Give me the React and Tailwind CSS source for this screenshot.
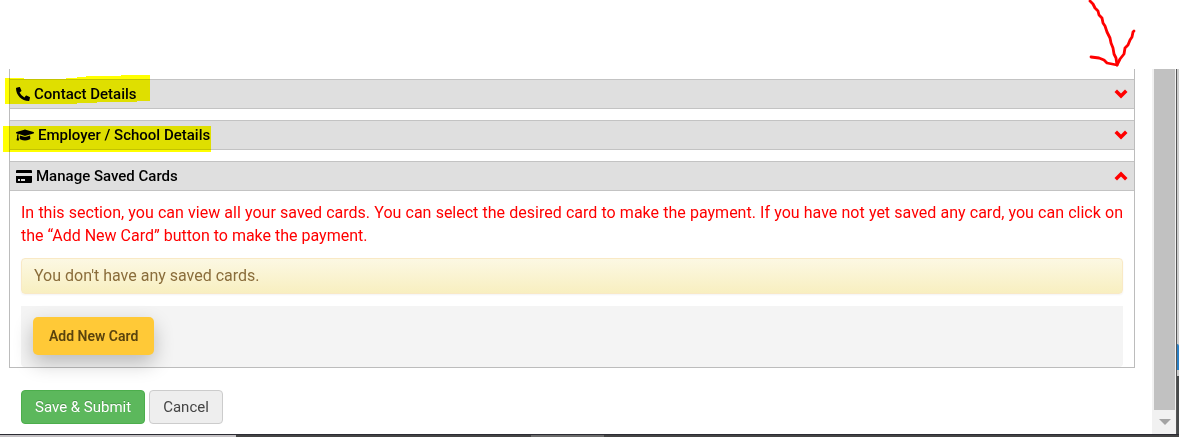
import React from 'react';
import { FaGraduationCap, FaPhoneAlt } from 'react-icons/fa';

const CardIcon = () => (
    <svg width="16" height="13" viewBox="0 0 16 13" aria-hidden="true">
        <path d="M1 0h14a1 1 0 0 1 1 1v2H0V1a1 1 0 0 1 1-1z" />
        <path fillRule="evenodd" d="M0 6h16v6a1 1 0 0 1-1 1H1a1 1 0 0 1-1-1zM2 9v2h2V9zM5 9v2h4V9z" />
    </svg>
);

const Chevron = ({ open }) => (
    <svg width="14" height="10" viewBox="0 0 14 10" className={open ? 'rotate-180' : ''} aria-hidden="true">
        <path d="M0.5 3L3 0.5L7 4.5L11 0.5L13.5 3L7 9.5z" fill="#ff0000" />
    </svg>
);

const SectionHeader = ({ icon, title, open = false }) => (
    <button
        type="button"
        aria-expanded={open}
        className="flex h-[30px] w-full items-center justify-between border-y border-[#c3c3c3] bg-[#dfdfdf] px-1.5 text-[15px] leading-5 font-medium text-black"
    >
        <span className="flex items-center gap-1">
            {icon}
            <span>{title}</span>
        </span>
        <Chevron open={open} />
    </button>
);

const Highlights = () => (
    <svg width="220" height="160" className="pointer-events-none absolute left-0 top-0 mix-blend-multiply" aria-hidden="true">
        <path
            d="M5 78H24V79H66V78H77V77H86V76H121V75H150V101H137V102H97V103H77V104H5z M3 126H211V152H3z"
            fill="#ffff00"
        />
    </svg>
);

const PenArrow = () => (
    <svg
        width="60"
        height="70"
        className="pointer-events-none absolute right-[37px] top-0"
        fill="none"
        stroke="#ff0000"
        strokeWidth="2.8"
        strokeLinecap="round"
        strokeLinejoin="round"
        aria-hidden="true"
    >
        <path d="M8 1L11 4L13 8L16 11L17 15L20 18L21 23L23 26L25 32L28 38L29 43L31 48L32 54L34 58L35 65" />
        <path d="M9 57L17 58L22 60L25 63L30 64L35 65L38 59L42 54L43 48L46 45L48 40L50 37L51 32L52 31" />
    </svg>
);

const Scrollbar = () => (
    <div className="flex w-6 flex-col items-center bg-[#f1f1f1] pl-px" aria-hidden="true">
        <div className="w-[21px] flex-1 bg-[#c1c1c1]"></div>
        <div className="flex h-6 items-center justify-center">
            <svg width="12" height="6" viewBox="0 0 12 6">
                <path d="M0 0h12L6 6z" fill="#a3a3a3" />
            </svg>
        </div>
    </div>
);

export default function App() {
    return (
        <div className="relative flex min-h-screen flex-col bg-white font-[Roboto,sans-serif]">
            <div className="flex flex-1 pt-[69px]">
                <main className="min-w-0 flex-1 pl-[9px] pr-[17px]">
                    <div className="border-x border-b border-[#bcbcbc] pt-2.5">
                        <div className="flex flex-col gap-[11px]">
                            <SectionHeader icon={<FaPhoneAlt size={14} />} title="Contact Details" />
                            <SectionHeader icon={<FaGraduationCap size={18} />} title="Employer / School Details" />
                            <SectionHeader icon={<CardIcon />} title="Manage Saved Cards" open />
                        </div>
                        <div className="px-[11px] pt-2.5">
                            <p className="text-justify text-[16px] leading-[23px] text-[#ff0000]">
                                In this section, you can view all your saved cards. You can select the desired card to
                                make the payment. If you have not yet saved any card, you can click on the “Add New
                                Card” button to make the payment.
                            </p>
                            <div className="mt-[11px] rounded border border-[#f9e9c5] bg-linear-to-b from-[#fcf8e3] to-[#f8efc0] px-3 py-1.5 text-[16px] leading-[22px] text-[#8a6d3b] shadow-[0_1px_2px_rgba(0,0,0,0.05)]">
                                You don't have any saved cards.
                            </div>
                            <div className="mt-3 rounded-b bg-[#f4f4f4] px-3 pb-3 pt-[11px]">
                                <button
                                    type="button"
                                    className="h-[38px] rounded-[5px] bg-[#ffc937] px-4 text-[14px] font-semibold text-[#5a430d] shadow-[0_8px_20px_rgba(0,0,0,0.24)]"
                                >
                                    Add New Card
                                </button>
                            </div>
                        </div>
                    </div>
                    <div className="flex gap-1 px-3 pt-[22px]">
                        <button
                            type="submit"
                            className="h-[34px] rounded border border-[#4cae4c] bg-[#5cb85c] px-[13px] text-[15px] text-white [text-shadow:0_-1px_0_rgba(0,0,0,0.2)]"
                        >
                            Save &amp; Submit
                        </button>
                        <button
                            type="button"
                            className="h-[34px] rounded border border-[#cccccc] bg-[#eeeeee] px-[13px] text-[15px] text-[#444444]"
                        >
                            Cancel
                        </button>
                    </div>
                </main>
                <Scrollbar />
                <div className="w-px bg-[#555555]"></div>
                <div className="flex w-0.5 flex-col bg-[#cccccc]">
                    <div className="flex-1"></div>
                    <div className="h-[26px] rounded-tr-full bg-[#2a7fc4]"></div>
                    <div className="h-1.5"></div>
                    <div className="h-[58px] bg-[#474a4b]"></div>
                </div>
            </div>
            <div className="h-[3px] border-t border-[#2b2b33] bg-[#444444]">
                <div className="flex h-0.5">
                    <div className="w-1/5 bg-[#c4c1c4]"></div>
                    <div className="w-1/4"></div>
                    <div className="w-1/16 bg-[#6b6b6b]"></div>
                </div>
            </div>
            <Highlights />
            <PenArrow />
        </div>
    );
}
